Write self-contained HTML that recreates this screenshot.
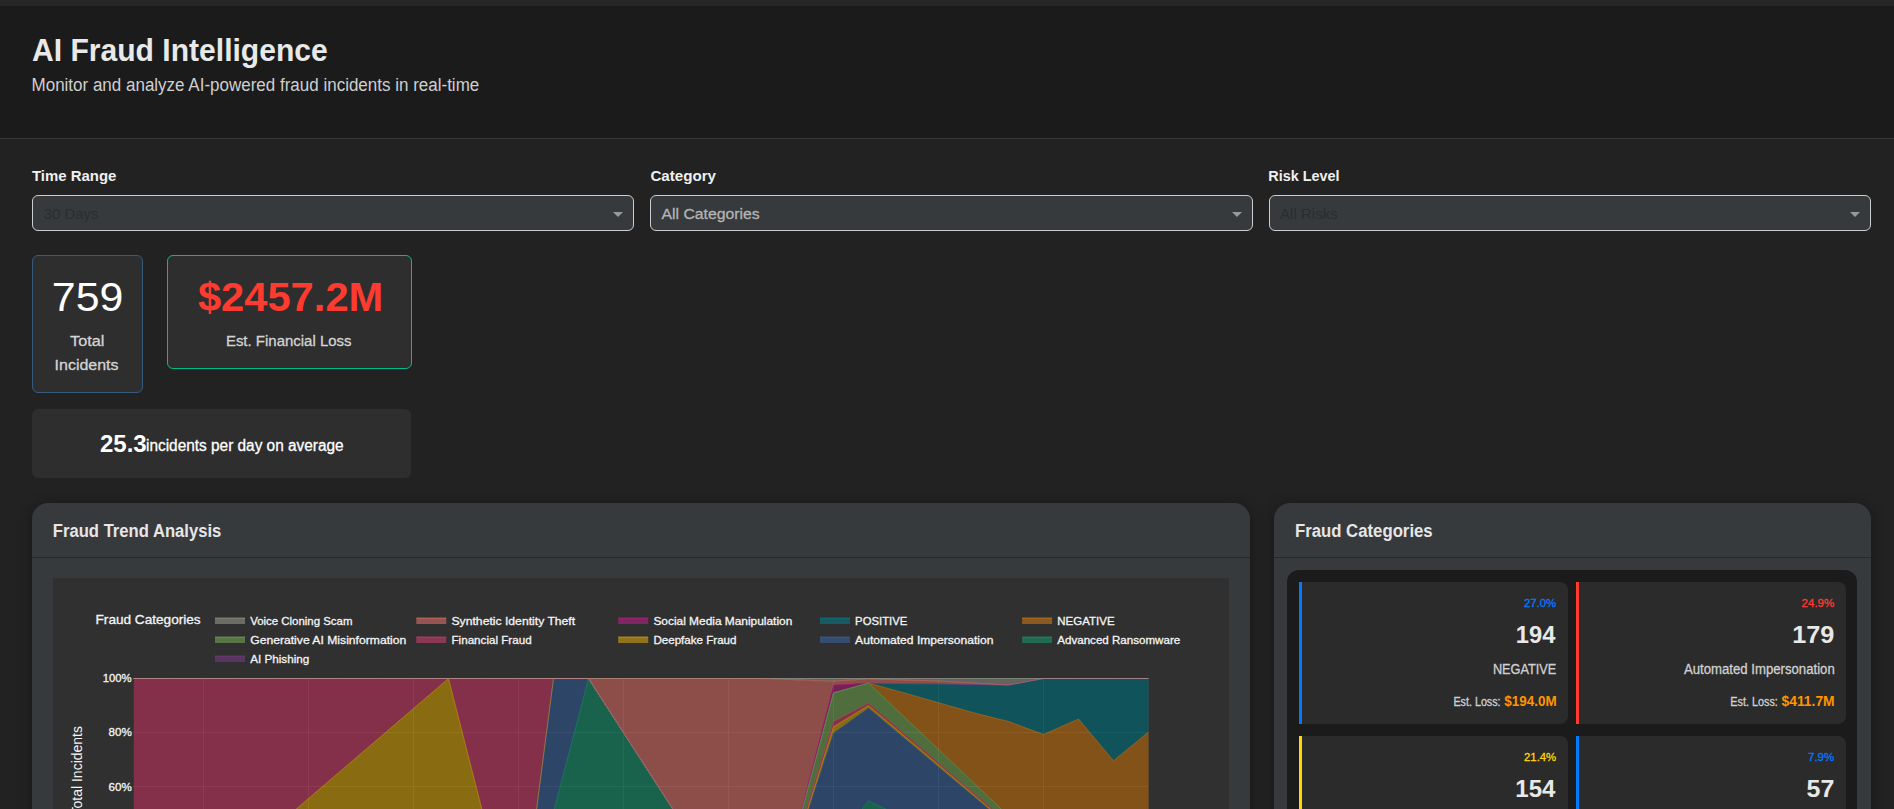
<!DOCTYPE html>
<html><head><meta charset="utf-8"><style>
*{margin:0;padding:0;box-sizing:border-box}
html,body{width:1894px;height:809px;overflow:hidden;background:#222;font-family:"Liberation Sans",sans-serif}
.a{position:absolute}
.sel{position:absolute;top:195px;height:36px;border:1px solid #cdcdcd;border-radius:6px;background:#363a3d}
.sel i{position:absolute;right:10px;top:16px;width:0;height:0;border-left:5px solid transparent;border-right:5px solid transparent;border-top:5px solid #999}
.stat{position:absolute;background:#2e2e2e;border-radius:6px}
.card{position:absolute;top:503px;height:340px;background:#363a3d;border-radius:16px;box-shadow:0 2px 14px rgba(0,0,0,0.35)}
.cc{position:absolute;width:269px;height:142px;background:#2b2b2b;border-radius:0 8px 8px 0;border-left:3px solid}
</style></head><body>
<div class="a" style="left:0;top:0;width:1894px;height:6px;background:#262626"></div>
<div class="a" style="left:0;top:6px;width:1894px;height:132px;background:#1b1b1b"></div>
<div class="a" style="left:0;top:138px;width:1894px;height:1px;background:#33383d"></div>
<div class="sel" style="left:32px;width:602px"><i></i></div>
<div class="sel" style="left:650px;width:603px"><i></i></div>
<div class="sel" style="left:1269px;width:602px"><i></i></div>
<div class="stat" style="left:32px;top:255px;width:111px;height:138px;border:1px solid #375a7f"></div>
<div class="stat" style="left:167px;top:255px;width:245px;height:114px;border:1px solid #00bc8c"></div>
<div class="stat" style="left:32px;top:409px;width:379px;height:69px"></div>
<div class="card" style="left:32px;width:1218px"></div>
<div class="a" style="left:32px;top:557px;width:1218px;height:1px;background:#25292d"></div>
<div class="a" style="left:53px;top:578px;width:1176px;height:260px;background:#303030"></div>
<div class="card" style="left:1274px;width:597px"></div>
<div class="a" style="left:1274px;top:557px;width:597px;height:1px;background:#25292d"></div>
<div class="a" style="left:1287px;top:570px;width:570px;height:300px;background:#1b1b1b;border-radius:12px"></div>
<div class="cc" style="left:1299px;top:582px;border-color:#007aff"></div>
<div class="cc" style="left:1576px;top:582px;width:270px;border-color:#ff3b30"></div>
<div class="cc" style="left:1299px;top:736px;border-color:#ffd60a"></div>
<div class="cc" style="left:1576px;top:736px;width:270px;border-color:#007aff"></div>
<svg class="a" style="left:0;top:0" width="1894" height="809" viewBox="0 0 1894 809" font-family="Liberation Sans, sans-serif">
<g><rect x="133" y="678" width="1016" height="271" fill="#212121"/><line x1="133" x2="1149" y1="732.5" y2="732.5" stroke="#353535" stroke-width="1"/><line x1="133" x2="1149" y1="786.5" y2="786.5" stroke="#353535" stroke-width="1"/><line x1="133" x2="1149" y1="840.5" y2="840.5" stroke="#353535" stroke-width="1"/><line x1="133" x2="1149" y1="894.5" y2="894.5" stroke="#353535" stroke-width="1"/><line x1="203.5" x2="203.5" y1="678" y2="948" stroke="#353535" stroke-width="1"/><line x1="308.5" x2="308.5" y1="678" y2="948" stroke="#353535" stroke-width="1"/><line x1="413.5" x2="413.5" y1="678" y2="948" stroke="#353535" stroke-width="1"/><line x1="518.5" x2="518.5" y1="678" y2="948" stroke="#353535" stroke-width="1"/><line x1="623.5" x2="623.5" y1="678" y2="948" stroke="#353535" stroke-width="1"/><line x1="728.5" x2="728.5" y1="678" y2="948" stroke="#353535" stroke-width="1"/><line x1="833.5" x2="833.5" y1="678" y2="948" stroke="#353535" stroke-width="1"/><line x1="938.5" x2="938.5" y1="678" y2="948" stroke="#353535" stroke-width="1"/><line x1="1043.5" x2="1043.5" y1="678" y2="948" stroke="#353535" stroke-width="1"/><line x1="1148.5" x2="1148.5" y1="678" y2="948" stroke="#353535" stroke-width="1"/><polygon points="133.5,678.0 168.5,678.0 203.5,678.0 238.5,678.0 273.5,678.0 308.5,678.0 343.5,678.0 378.5,678.0 413.5,678.0 448.5,678.0 483.5,678.0 518.5,678.0 553.5,678.0 588.5,678.0 623.5,678.0 658.5,678.0 693.5,678.0 728.5,678.0 763.5,678.0 798.5,678.0 833.5,678.0 868.5,678.0 903.5,678.0 938.5,678.0 973.5,678.0 1008.5,678.0 1043.5,678.0 1078.5,678.0 1113.5,678.0 1148.5,678.0 1148.5,678.5 1113.5,678.5 1078.5,678.5 1043.5,678.5 1008.5,685.0 973.5,683.0 938.5,681.0 903.5,680.0 868.5,678.8 833.5,681.1 798.5,679.9 763.5,678.5 728.5,678.5 693.5,678.5 658.5,678.5 623.5,678.5 588.5,678.5 553.5,678.5 518.5,678.5 483.5,678.5 448.5,678.5 413.5,678.5 378.5,678.5 343.5,678.5 308.5,678.5 273.5,678.5 238.5,678.5 203.5,678.5 168.5,678.5 133.5,678.5" fill="rgba(165,170,153,0.5)"/><polygon points="133.5,678.5 168.5,678.5 203.5,678.5 238.5,678.5 273.5,678.5 308.5,678.5 343.5,678.5 378.5,678.5 413.5,678.5 448.5,678.5 483.5,678.5 518.5,678.5 553.5,678.5 588.5,678.5 623.5,678.5 658.5,678.5 693.5,678.5 728.5,678.5 763.5,678.5 798.5,679.9 833.5,681.1 868.5,678.8 903.5,680.0 938.5,681.0 973.5,683.0 1008.5,685.0 1043.5,678.5 1078.5,678.5 1113.5,678.5 1148.5,678.5 1148.5,678.5 1113.5,678.5 1078.5,678.5 1043.5,678.5 1008.5,685.0 973.5,684.5 938.5,683.8 903.5,683.5 868.5,683.1 833.5,685.1 798.5,821.2 763.5,949.0 728.5,895.3 693.5,841.1 658.5,786.9 623.5,732.7 588.5,678.5 553.5,678.5 518.5,678.5 483.5,678.5 448.5,678.5 413.5,678.5 378.5,678.5 343.5,678.5 308.5,678.5 273.5,678.5 238.5,678.5 203.5,678.5 168.5,678.5 133.5,678.5" fill="rgba(249,123,114,0.5)"/><polygon points="133.5,678.5 168.5,678.5 203.5,678.5 238.5,678.5 273.5,678.5 308.5,678.5 343.5,678.5 378.5,678.5 413.5,678.5 448.5,678.5 483.5,678.5 518.5,678.5 553.5,678.5 588.5,678.5 623.5,732.7 658.5,786.9 693.5,841.1 728.5,895.3 763.5,949.0 798.5,821.2 833.5,685.1 868.5,683.1 903.5,683.5 938.5,683.8 973.5,684.5 1008.5,685.0 1043.5,678.5 1078.5,678.5 1113.5,678.5 1148.5,678.5 1148.5,678.5 1113.5,678.5 1078.5,678.5 1043.5,678.5 1008.5,685.0 973.5,684.5 938.5,683.8 903.5,683.8 868.5,683.1 833.5,692.8 798.5,823.5 763.5,949.0 728.5,895.3 693.5,841.1 658.5,786.9 623.5,732.7 588.5,678.5 553.5,678.5 518.5,678.5 483.5,678.5 448.5,678.5 413.5,678.5 378.5,678.5 343.5,678.5 308.5,678.5 273.5,678.5 238.5,678.5 203.5,678.5 168.5,678.5 133.5,678.5" fill="rgba(207,28,144,0.5)"/><polygon points="133.5,678.5 168.5,678.5 203.5,678.5 238.5,678.5 273.5,678.5 308.5,678.5 343.5,678.5 378.5,678.5 413.5,678.5 448.5,678.5 483.5,678.5 518.5,678.5 553.5,678.5 588.5,678.5 623.5,732.7 658.5,786.9 693.5,841.1 728.5,895.3 763.5,949.0 798.5,823.5 833.5,692.8 868.5,683.1 903.5,683.8 938.5,683.8 973.5,684.5 1008.5,685.0 1043.5,678.5 1078.5,678.5 1113.5,678.5 1148.5,678.5 1148.5,732.0 1113.5,760.7 1078.5,719.0 1043.5,734.5 1008.5,721.5 973.5,712.7 938.5,702.7 903.5,692.7 868.5,683.1 833.5,692.8 798.5,823.5 763.5,949.0 728.5,895.3 693.5,841.1 658.5,786.9 623.5,732.7 588.5,678.5 553.5,678.5 518.5,678.5 483.5,678.5 448.5,678.5 413.5,678.5 378.5,678.5 343.5,678.5 308.5,678.5 273.5,678.5 238.5,678.5 203.5,678.5 168.5,678.5 133.5,678.5" fill="rgba(0,134,149,0.5)"/><polygon points="133.5,678.5 168.5,678.5 203.5,678.5 238.5,678.5 273.5,678.5 308.5,678.5 343.5,678.5 378.5,678.5 413.5,678.5 448.5,678.5 483.5,678.5 518.5,678.5 553.5,678.5 588.5,678.5 623.5,732.7 658.5,786.9 693.5,841.1 728.5,895.3 763.5,949.0 798.5,823.5 833.5,692.8 868.5,683.1 903.5,692.7 938.5,702.7 973.5,712.7 1008.5,721.5 1043.5,734.5 1078.5,719.0 1113.5,760.7 1148.5,732.0 1148.5,949.0 1113.5,949.0 1078.5,949.0 1043.5,949.0 1008.5,815.9 973.5,782.7 938.5,749.5 903.5,716.3 868.5,683.1 833.5,692.8 798.5,823.5 763.5,949.0 728.5,895.3 693.5,841.1 658.5,786.9 623.5,732.7 588.5,678.5 553.5,678.5 518.5,678.5 483.5,678.5 448.5,678.5 413.5,678.5 378.5,678.5 343.5,678.5 308.5,678.5 273.5,678.5 238.5,678.5 203.5,678.5 168.5,678.5 133.5,678.5" fill="rgba(230,131,16,0.5)"/><polygon points="133.5,678.5 168.5,678.5 203.5,678.5 238.5,678.5 273.5,678.5 308.5,678.5 343.5,678.5 378.5,678.5 413.5,678.5 448.5,678.5 483.5,678.5 518.5,678.5 553.5,678.5 588.5,678.5 623.5,732.7 658.5,786.9 693.5,841.1 728.5,895.3 763.5,949.0 798.5,823.5 833.5,692.8 868.5,683.1 903.5,716.3 938.5,749.5 973.5,782.7 1008.5,815.9 1043.5,949.0 1078.5,949.0 1113.5,949.0 1148.5,949.0 1148.5,949.0 1113.5,949.0 1078.5,949.0 1043.5,949.0 1008.5,822.5 973.5,792.9 938.5,763.0 903.5,733.1 868.5,703.2 833.5,721.7 798.5,834.7 763.5,949.0 728.5,895.3 693.5,841.1 658.5,786.9 623.5,732.7 588.5,678.5 553.5,678.5 518.5,678.5 483.5,678.5 448.5,678.5 413.5,678.5 378.5,678.5 343.5,678.5 308.5,678.5 273.5,678.5 238.5,678.5 203.5,678.5 168.5,678.5 133.5,678.5" fill="rgba(128,186,90,0.5)"/><polygon points="133.5,678.5 168.5,678.5 203.5,678.5 238.5,678.5 273.5,678.5 308.5,678.5 343.5,678.5 378.5,678.5 413.5,678.5 448.5,678.5 483.5,678.5 518.5,678.5 553.5,678.5 588.5,678.5 623.5,732.7 658.5,786.9 693.5,841.1 728.5,895.3 763.5,949.0 798.5,834.7 833.5,721.7 868.5,703.2 903.5,733.1 938.5,763.0 973.5,792.9 1008.5,822.5 1043.5,949.0 1078.5,949.0 1113.5,949.0 1148.5,949.0 1148.5,949.0 1113.5,949.0 1078.5,949.0 1043.5,949.0 1008.5,824.2 973.5,794.5 938.5,764.8 903.5,735.1 868.5,705.4 833.5,726.7 798.5,838.1 763.5,949.0 728.5,895.3 693.5,841.1 658.5,786.9 623.5,732.7 588.5,678.5 553.5,678.5 518.5,949.0 483.5,815.5 448.5,678.5 413.5,708.5 378.5,738.5 343.5,768.5 308.5,798.5 273.5,828.5 238.5,858.5 203.5,888.5 168.5,918.5 133.5,948.5" fill="rgba(231,63,116,0.5)"/><polygon points="133.5,948.5 168.5,918.5 203.5,888.5 238.5,858.5 273.5,828.5 308.5,798.5 343.5,768.5 378.5,738.5 413.5,708.5 448.5,678.5 483.5,815.5 518.5,949.0 553.5,678.5 588.5,678.5 623.5,732.7 658.5,786.9 693.5,841.1 728.5,895.3 763.5,949.0 798.5,838.1 833.5,726.7 868.5,705.4 903.5,735.1 938.5,764.8 973.5,794.5 1008.5,824.2 1043.5,949.0 1078.5,949.0 1113.5,949.0 1148.5,949.0 1148.5,949.0 1113.5,949.0 1078.5,949.0 1043.5,949.0 1008.5,825.7 973.5,796.3 938.5,766.9 903.5,737.5 868.5,708.1 833.5,733.0 798.5,839.7 763.5,949.0 728.5,895.3 693.5,841.1 658.5,786.9 623.5,732.7 588.5,678.5 553.5,678.5 518.5,949.0 483.5,949.0 448.5,949.0 413.5,949.0 378.5,949.0 343.5,949.0 308.5,949.0 273.5,949.0 238.5,949.0 203.5,949.0 168.5,949.0 133.5,949.0" fill="rgba(242,183,1,0.5)"/><polygon points="133.5,949.0 168.5,949.0 203.5,949.0 238.5,949.0 273.5,949.0 308.5,949.0 343.5,949.0 378.5,949.0 413.5,949.0 448.5,949.0 483.5,949.0 518.5,949.0 553.5,678.5 588.5,678.5 623.5,732.7 658.5,786.9 693.5,841.1 728.5,895.3 763.5,949.0 798.5,839.7 833.5,733.0 868.5,708.1 903.5,737.5 938.5,766.9 973.5,796.3 1008.5,825.7 1043.5,949.0 1078.5,949.0 1113.5,949.0 1148.5,949.0 1148.5,949.0 1113.5,949.0 1078.5,949.0 1043.5,949.0 1008.5,949.0 973.5,850.5 938.5,833.5 903.5,817.5 868.5,800.8 833.5,845.5 798.5,890.5 763.5,949.0 728.5,895.3 693.5,841.1 658.5,786.9 623.5,732.7 588.5,678.5 553.5,812.0 518.5,949.0 483.5,949.0 448.5,949.0 413.5,949.0 378.5,949.0 343.5,949.0 308.5,949.0 273.5,949.0 238.5,949.0 203.5,949.0 168.5,949.0 133.5,949.0" fill="rgba(57,105,172,0.5)"/><polygon points="133.5,949.0 168.5,949.0 203.5,949.0 238.5,949.0 273.5,949.0 308.5,949.0 343.5,949.0 378.5,949.0 413.5,949.0 448.5,949.0 483.5,949.0 518.5,949.0 553.5,812.0 588.5,678.5 623.5,732.7 658.5,786.9 693.5,841.1 728.5,895.3 763.5,949.0 798.5,890.5 833.5,845.5 868.5,800.8 903.5,817.5 938.5,833.5 973.5,850.5 1008.5,949.0 1043.5,949.0 1078.5,949.0 1113.5,949.0 1148.5,949.0 1148.5,949.0 1113.5,949.0 1078.5,949.0 1043.5,949.0 1008.5,949.0 973.5,949.0 938.5,949.0 903.5,949.0 868.5,949.0 833.5,949.0 798.5,949.0 763.5,949.0 728.5,949.0 693.5,949.0 658.5,949.0 623.5,949.0 588.5,949.0 553.5,949.0 518.5,949.0 483.5,949.0 448.5,949.0 413.5,949.0 378.5,949.0 343.5,949.0 308.5,949.0 273.5,949.0 238.5,949.0 203.5,949.0 168.5,949.0 133.5,949.0" fill="rgba(17,165,121,0.5)"/><polygon points="133.5,949.0 168.5,949.0 203.5,949.0 238.5,949.0 273.5,949.0 308.5,949.0 343.5,949.0 378.5,949.0 413.5,949.0 448.5,949.0 483.5,949.0 518.5,949.0 553.5,949.0 588.5,949.0 623.5,949.0 658.5,949.0 693.5,949.0 728.5,949.0 763.5,949.0 798.5,949.0 833.5,949.0 868.5,949.0 903.5,949.0 938.5,949.0 973.5,949.0 1008.5,949.0 1043.5,949.0 1078.5,949.0 1113.5,949.0 1148.5,949.0 1148.5,948.5 1113.5,948.5 1078.5,948.5 1043.5,948.5 1008.5,948.5 973.5,948.5 938.5,948.5 903.5,948.5 868.5,948.5 833.5,948.5 798.5,948.5 763.5,948.5 728.5,948.5 693.5,948.5 658.5,948.5 623.5,948.5 588.5,948.5 553.5,948.5 518.5,948.5 483.5,948.5 448.5,948.5 413.5,948.5 378.5,948.5 343.5,948.5 308.5,948.5 273.5,948.5 238.5,948.5 203.5,948.5 168.5,948.5 133.5,948.5" fill="rgba(127,60,141,0.5)"/><polyline points="133.5,949.0 168.5,949.0 203.5,949.0 238.5,949.0 273.5,949.0 308.5,949.0 343.5,949.0 378.5,949.0 413.5,949.0 448.5,949.0 483.5,949.0 518.5,949.0 553.5,949.0 588.5,949.0 623.5,949.0 658.5,949.0 693.5,949.0 728.5,949.0 763.5,949.0 798.5,949.0 833.5,949.0 868.5,949.0 903.5,949.0 938.5,949.0 973.5,949.0 1008.5,949.0 1043.5,949.0 1078.5,949.0 1113.5,949.0 1148.5,949.0" fill="none" stroke="rgb(127,60,141)" stroke-opacity="0.7" stroke-width="0.6"/><polyline points="133.5,949.0 168.5,949.0 203.5,949.0 238.5,949.0 273.5,949.0 308.5,949.0 343.5,949.0 378.5,949.0 413.5,949.0 448.5,949.0 483.5,949.0 518.5,949.0 553.5,812.0 588.5,678.5 623.5,732.7 658.5,786.9 693.5,841.1 728.5,895.3 763.5,949.0 798.5,890.5 833.5,845.5 868.5,800.8 903.5,817.5 938.5,833.5 973.5,850.5 1008.5,949.0 1043.5,949.0 1078.5,949.0 1113.5,949.0 1148.5,949.0" fill="none" stroke="rgb(17,165,121)" stroke-opacity="0.7" stroke-width="0.6"/><polyline points="133.5,949.0 168.5,949.0 203.5,949.0 238.5,949.0 273.5,949.0 308.5,949.0 343.5,949.0 378.5,949.0 413.5,949.0 448.5,949.0 483.5,949.0 518.5,949.0 553.5,678.5 588.5,678.5 623.5,732.7 658.5,786.9 693.5,841.1 728.5,895.3 763.5,949.0 798.5,839.7 833.5,733.0 868.5,708.1 903.5,737.5 938.5,766.9 973.5,796.3 1008.5,825.7 1043.5,949.0 1078.5,949.0 1113.5,949.0 1148.5,949.0" fill="none" stroke="rgb(57,105,172)" stroke-opacity="0.7" stroke-width="0.6"/><polyline points="133.5,948.5 168.5,918.5 203.5,888.5 238.5,858.5 273.5,828.5 308.5,798.5 343.5,768.5 378.5,738.5 413.5,708.5 448.5,678.5 483.5,815.5 518.5,949.0 553.5,678.5 588.5,678.5 623.5,732.7 658.5,786.9 693.5,841.1 728.5,895.3 763.5,949.0 798.5,838.1 833.5,726.7 868.5,705.4 903.5,735.1 938.5,764.8 973.5,794.5 1008.5,824.2 1043.5,949.0 1078.5,949.0 1113.5,949.0 1148.5,949.0" fill="none" stroke="rgb(242,183,1)" stroke-opacity="0.7" stroke-width="0.6"/><polyline points="133.5,678.5 168.5,678.5 203.5,678.5 238.5,678.5 273.5,678.5 308.5,678.5 343.5,678.5 378.5,678.5 413.5,678.5 448.5,678.5 483.5,678.5 518.5,678.5 553.5,678.5 588.5,678.5 623.5,732.7 658.5,786.9 693.5,841.1 728.5,895.3 763.5,949.0 798.5,834.7 833.5,721.7 868.5,703.2 903.5,733.1 938.5,763.0 973.5,792.9 1008.5,822.5 1043.5,949.0 1078.5,949.0 1113.5,949.0 1148.5,949.0" fill="none" stroke="rgb(231,63,116)" stroke-opacity="0.7" stroke-width="0.6"/><polyline points="133.5,678.5 168.5,678.5 203.5,678.5 238.5,678.5 273.5,678.5 308.5,678.5 343.5,678.5 378.5,678.5 413.5,678.5 448.5,678.5 483.5,678.5 518.5,678.5 553.5,678.5 588.5,678.5 623.5,732.7 658.5,786.9 693.5,841.1 728.5,895.3 763.5,949.0 798.5,823.5 833.5,692.8 868.5,683.1 903.5,716.3 938.5,749.5 973.5,782.7 1008.5,815.9 1043.5,949.0 1078.5,949.0 1113.5,949.0 1148.5,949.0" fill="none" stroke="rgb(128,186,90)" stroke-opacity="0.7" stroke-width="0.6"/><polyline points="133.5,678.5 168.5,678.5 203.5,678.5 238.5,678.5 273.5,678.5 308.5,678.5 343.5,678.5 378.5,678.5 413.5,678.5 448.5,678.5 483.5,678.5 518.5,678.5 553.5,678.5 588.5,678.5 623.5,732.7 658.5,786.9 693.5,841.1 728.5,895.3 763.5,949.0 798.5,823.5 833.5,692.8 868.5,683.1 903.5,692.7 938.5,702.7 973.5,712.7 1008.5,721.5 1043.5,734.5 1078.5,719.0 1113.5,760.7 1148.5,732.0" fill="none" stroke="rgb(230,131,16)" stroke-opacity="0.7" stroke-width="0.6"/><polyline points="133.5,678.5 168.5,678.5 203.5,678.5 238.5,678.5 273.5,678.5 308.5,678.5 343.5,678.5 378.5,678.5 413.5,678.5 448.5,678.5 483.5,678.5 518.5,678.5 553.5,678.5 588.5,678.5 623.5,732.7 658.5,786.9 693.5,841.1 728.5,895.3 763.5,949.0 798.5,823.5 833.5,692.8 868.5,683.1 903.5,683.8 938.5,683.8 973.5,684.5 1008.5,685.0 1043.5,678.5 1078.5,678.5 1113.5,678.5 1148.5,678.5" fill="none" stroke="rgb(0,134,149)" stroke-opacity="0.7" stroke-width="0.6"/><polyline points="133.5,678.5 168.5,678.5 203.5,678.5 238.5,678.5 273.5,678.5 308.5,678.5 343.5,678.5 378.5,678.5 413.5,678.5 448.5,678.5 483.5,678.5 518.5,678.5 553.5,678.5 588.5,678.5 623.5,732.7 658.5,786.9 693.5,841.1 728.5,895.3 763.5,949.0 798.5,821.2 833.5,685.1 868.5,683.1 903.5,683.5 938.5,683.8 973.5,684.5 1008.5,685.0 1043.5,678.5 1078.5,678.5 1113.5,678.5 1148.5,678.5" fill="none" stroke="rgb(207,28,144)" stroke-opacity="0.7" stroke-width="0.6"/><polyline points="133.5,678.5 168.5,678.5 203.5,678.5 238.5,678.5 273.5,678.5 308.5,678.5 343.5,678.5 378.5,678.5 413.5,678.5 448.5,678.5 483.5,678.5 518.5,678.5 553.5,678.5 588.5,678.5 623.5,678.5 658.5,678.5 693.5,678.5 728.5,678.5 763.5,678.5 798.5,679.9 833.5,681.1 868.5,678.8 903.5,680.0 938.5,681.0 973.5,683.0 1008.5,685.0 1043.5,678.5 1078.5,678.5 1113.5,678.5 1148.5,678.5" fill="none" stroke="rgb(249,123,114)" stroke-opacity="0.7" stroke-width="0.6"/><polyline points="133.5,678.5 168.5,678.5 203.5,678.5 238.5,678.5 273.5,678.5 308.5,678.5 343.5,678.5 378.5,678.5 413.5,678.5 448.5,678.5 483.5,678.5 518.5,678.5 553.5,678.5 588.5,678.5 623.5,678.5 658.5,678.5 693.5,678.5 728.5,678.5 763.5,678.5 798.5,678.5 833.5,678.5 868.5,678.5 903.5,678.5 938.5,678.5 973.5,678.5 1008.5,678.5 1043.5,678.5 1078.5,678.5 1113.5,678.5 1148.5,678.5" fill="none" stroke="rgb(165,170,153)" stroke-opacity="0.7" stroke-width="0.6"/></g>
<g><rect x="215.0" y="618.0" width="30" height="6" fill="rgba(165,170,153,0.5)"/><line x1="215.0" x2="245.0" y1="618.0" y2="618.0" stroke="rgb(165,170,153)" stroke-width="0.6"/><rect x="416.3" y="618.0" width="30" height="6" fill="rgba(249,123,114,0.5)"/><line x1="416.3" x2="446.3" y1="618.0" y2="618.0" stroke="rgb(249,123,114)" stroke-width="0.6"/><rect x="618.2" y="618.0" width="30" height="6" fill="rgba(207,28,144,0.5)"/><line x1="618.2" x2="648.2" y1="618.0" y2="618.0" stroke="rgb(207,28,144)" stroke-width="0.6"/><rect x="819.9" y="618.0" width="30" height="6" fill="rgba(0,134,149,0.5)"/><line x1="819.9" x2="849.9" y1="618.0" y2="618.0" stroke="rgb(0,134,149)" stroke-width="0.6"/><rect x="1022.1" y="618.0" width="30" height="6" fill="rgba(230,131,16,0.5)"/><line x1="1022.1" x2="1052.1" y1="618.0" y2="618.0" stroke="rgb(230,131,16)" stroke-width="0.6"/><rect x="215.0" y="637.0" width="30" height="6" fill="rgba(128,186,90,0.5)"/><line x1="215.0" x2="245.0" y1="637.0" y2="637.0" stroke="rgb(128,186,90)" stroke-width="0.6"/><rect x="416.3" y="637.0" width="30" height="6" fill="rgba(231,63,116,0.5)"/><line x1="416.3" x2="446.3" y1="637.0" y2="637.0" stroke="rgb(231,63,116)" stroke-width="0.6"/><rect x="618.2" y="637.0" width="30" height="6" fill="rgba(242,183,1,0.5)"/><line x1="618.2" x2="648.2" y1="637.0" y2="637.0" stroke="rgb(242,183,1)" stroke-width="0.6"/><rect x="819.9" y="637.0" width="30" height="6" fill="rgba(57,105,172,0.5)"/><line x1="819.9" x2="849.9" y1="637.0" y2="637.0" stroke="rgb(57,105,172)" stroke-width="0.6"/><rect x="1022.1" y="637.0" width="30" height="6" fill="rgba(17,165,121,0.5)"/><line x1="1022.1" x2="1052.1" y1="637.0" y2="637.0" stroke="rgb(17,165,121)" stroke-width="0.6"/><rect x="215.0" y="656.0" width="30" height="6" fill="rgba(127,60,141,0.5)"/><line x1="215.0" x2="245.0" y1="656.0" y2="656.0" stroke="rgb(127,60,141)" stroke-width="0.6"/></g>
<text transform="translate(82.1,726) rotate(-90)" text-anchor="end" font-size="14" fill="#f4f4f4">Total Incidents</text>
<text x="32.00" y="61.00" font-size="32" fill="#e9e9e9" font-weight="700" textLength="295.75" lengthAdjust="spacingAndGlyphs">AI Fraud Intelligence</text><text x="31.54" y="90.50" font-size="17.6" fill="#cfcfcf" textLength="447.72" lengthAdjust="spacingAndGlyphs">Monitor and analyze AI-powered fraud incidents in real-time</text><text x="32.00" y="181.00" font-size="15.2" fill="#f0f0f0" font-weight="700" textLength="84.44" lengthAdjust="spacingAndGlyphs">Time Range</text><text x="650.40" y="181.00" font-size="15.2" fill="#f0f0f0" font-weight="700" textLength="65.65" lengthAdjust="spacingAndGlyphs">Category</text><text x="1268.35" y="181.00" font-size="15.2" fill="#f0f0f0" font-weight="700" textLength="71.15" lengthAdjust="spacingAndGlyphs">Risk Level</text><text x="43.80" y="219.00" font-size="15.5" fill="#2b2d2f" textLength="54.76" lengthAdjust="spacingAndGlyphs">30 Days</text><text x="661.50" y="219.00" font-size="15.5" fill="#b4b4b4" stroke="#b4b4b4" stroke-width="0.3" textLength="98.15" lengthAdjust="spacingAndGlyphs">All Categories</text><text x="1280.00" y="219.00" font-size="15.5" fill="#2b2d2f" textLength="57.76" lengthAdjust="spacingAndGlyphs">All Risks</text><text x="51.86" y="311.00" font-size="40" fill="#ffffff" textLength="71.48" lengthAdjust="spacingAndGlyphs">759</text><text x="70.00" y="345.70" font-size="15.2" fill="#d4d4d4" stroke="#d4d4d4" stroke-width="0.3" textLength="34.40" lengthAdjust="spacingAndGlyphs">Total</text><text x="54.55" y="369.80" font-size="15.2" fill="#d4d4d4" stroke="#d4d4d4" stroke-width="0.3" textLength="64.03" lengthAdjust="spacingAndGlyphs">Incidents</text><text x="197.90" y="311.00" font-size="40" fill="#ff3b30" font-weight="700" textLength="185.42" lengthAdjust="spacingAndGlyphs">$2457.2M</text><text x="225.91" y="345.90" font-size="15.2" fill="#d4d4d4" stroke="#d4d4d4" stroke-width="0.3" textLength="125.59" lengthAdjust="spacingAndGlyphs">Est. Financial Loss</text><text x="100.00" y="452.40" font-size="24" fill="#ffffff" font-weight="700">25.3</text><text x="146.04" y="450.50" font-size="16" fill="#ffffff" stroke="#ffffff" stroke-width="0.3" textLength="197.56" lengthAdjust="spacingAndGlyphs">incidents per day on average</text><text x="52.84" y="537.00" font-size="19.2" fill="#e6e6e6" font-weight="700" textLength="168.44" lengthAdjust="spacingAndGlyphs">Fraud Trend Analysis</text><text x="1294.93" y="536.80" font-size="19.2" fill="#e6e6e6" font-weight="700" textLength="137.76" lengthAdjust="spacingAndGlyphs">Fraud Categories</text><text x="95.55" y="623.80" font-size="13" fill="#f4f4f4" stroke="#f4f4f4" stroke-width="0.3" textLength="105.12" lengthAdjust="spacingAndGlyphs">Fraud Categories</text><text x="250.20" y="625.00" font-size="11.5" fill="#f4f4f4" stroke="#f4f4f4" stroke-width="0.3" textLength="102.28" lengthAdjust="spacingAndGlyphs">Voice Cloning Scam</text><text x="451.50" y="625.00" font-size="11.5" fill="#f4f4f4" stroke="#f4f4f4" stroke-width="0.3" textLength="123.65" lengthAdjust="spacingAndGlyphs">Synthetic Identity Theft</text><text x="653.40" y="625.00" font-size="11.5" fill="#f4f4f4" stroke="#f4f4f4" stroke-width="0.3" textLength="138.91" lengthAdjust="spacingAndGlyphs">Social Media Manipulation</text><text x="855.10" y="625.00" font-size="11.5" fill="#f4f4f4" stroke="#f4f4f4" stroke-width="0.3" textLength="52.18" lengthAdjust="spacingAndGlyphs">POSITIVE</text><text x="1057.30" y="625.00" font-size="11.5" fill="#f4f4f4" stroke="#f4f4f4" stroke-width="0.3">NEGATIVE</text><text x="250.20" y="644.00" font-size="11.5" fill="#f4f4f4" stroke="#f4f4f4" stroke-width="0.3" textLength="156.12" lengthAdjust="spacingAndGlyphs">Generative AI Misinformation</text><text x="451.50" y="644.00" font-size="11.5" fill="#f4f4f4" stroke="#f4f4f4" stroke-width="0.3" textLength="80.10" lengthAdjust="spacingAndGlyphs">Financial Fraud</text><text x="653.40" y="644.00" font-size="11.5" fill="#f4f4f4" stroke="#f4f4f4" stroke-width="0.3" textLength="83.10" lengthAdjust="spacingAndGlyphs">Deepfake Fraud</text><text x="855.10" y="644.00" font-size="11.5" fill="#f4f4f4" stroke="#f4f4f4" stroke-width="0.3" textLength="138.42" lengthAdjust="spacingAndGlyphs">Automated Impersonation</text><text x="1057.30" y="644.00" font-size="11.5" fill="#f4f4f4" stroke="#f4f4f4" stroke-width="0.3" textLength="122.90" lengthAdjust="spacingAndGlyphs">Advanced Ransomware</text><text x="250.20" y="663.00" font-size="11.5" fill="#f4f4f4" stroke="#f4f4f4" stroke-width="0.3" textLength="59.10" lengthAdjust="spacingAndGlyphs">AI Phishing</text><text x="102.70" y="682.00" font-size="11.2" fill="#f4f4f4" stroke="#f4f4f4" stroke-width="0.3" textLength="28.95" lengthAdjust="spacingAndGlyphs">100%</text><text x="108.50" y="736.20" font-size="11.2" fill="#f4f4f4" stroke="#f4f4f4" stroke-width="0.3" textLength="23.25" lengthAdjust="spacingAndGlyphs">80%</text><text x="108.50" y="790.50" font-size="11.2" fill="#f4f4f4" stroke="#f4f4f4" stroke-width="0.3" textLength="23.25" lengthAdjust="spacingAndGlyphs">60%</text><text x="1523.90" y="607.00" font-size="11.5" fill="#007aff" stroke="#007aff" stroke-width="0.3" textLength="32.32" lengthAdjust="spacingAndGlyphs">27.0%</text><text x="1515.81" y="643.00" font-size="24" fill="#e8e8e8" font-weight="700" textLength="39.54" lengthAdjust="spacingAndGlyphs">194</text><text x="1492.89" y="674.00" font-size="14" fill="#d0d0d0" stroke="#d0d0d0" stroke-width="0.3" textLength="63.42" lengthAdjust="spacingAndGlyphs">NEGATIVE</text><text x="1504.30" y="706.00" font-size="14" fill="#ff9500" font-weight="700" textLength="52.34" lengthAdjust="spacingAndGlyphs">$194.0M</text><text x="1453.40" y="706.00" font-size="12" fill="#d0d0d0" stroke="#d0d0d0" stroke-width="0.3" textLength="47.20" lengthAdjust="spacingAndGlyphs">Est. Loss:</text><text x="1801.60" y="607.00" font-size="11.5" fill="#ff3b30" stroke="#ff3b30" stroke-width="0.3">24.9%</text><text x="1792.25" y="643.00" font-size="24" fill="#e8e8e8" font-weight="700" textLength="42.12" lengthAdjust="spacingAndGlyphs">179</text><text x="1684.00" y="674.00" font-size="14" fill="#d0d0d0" stroke="#d0d0d0" stroke-width="0.3" textLength="150.74" lengthAdjust="spacingAndGlyphs">Automated Impersonation</text><text x="1781.50" y="706.00" font-size="14" fill="#ff9500" font-weight="700" textLength="53.16" lengthAdjust="spacingAndGlyphs">$411.7M</text><text x="1730.30" y="706.00" font-size="12" fill="#d0d0d0" stroke="#d0d0d0" stroke-width="0.3" textLength="47.50" lengthAdjust="spacingAndGlyphs">Est. Loss:</text><text x="1524.00" y="761.00" font-size="11.5" fill="#ffd60a" stroke="#ffd60a" stroke-width="0.3" textLength="32.22" lengthAdjust="spacingAndGlyphs">21.4%</text><text x="1515.30" y="797.00" font-size="24" fill="#e8e8e8" font-weight="700">154</text><text x="1808.00" y="761.00" font-size="11.5" fill="#007aff" stroke="#007aff" stroke-width="0.3">7.9%</text><text x="1806.60" y="797.00" font-size="24" fill="#e8e8e8" font-weight="700" textLength="27.76" lengthAdjust="spacingAndGlyphs">57</text>
</svg>
</body></html>
